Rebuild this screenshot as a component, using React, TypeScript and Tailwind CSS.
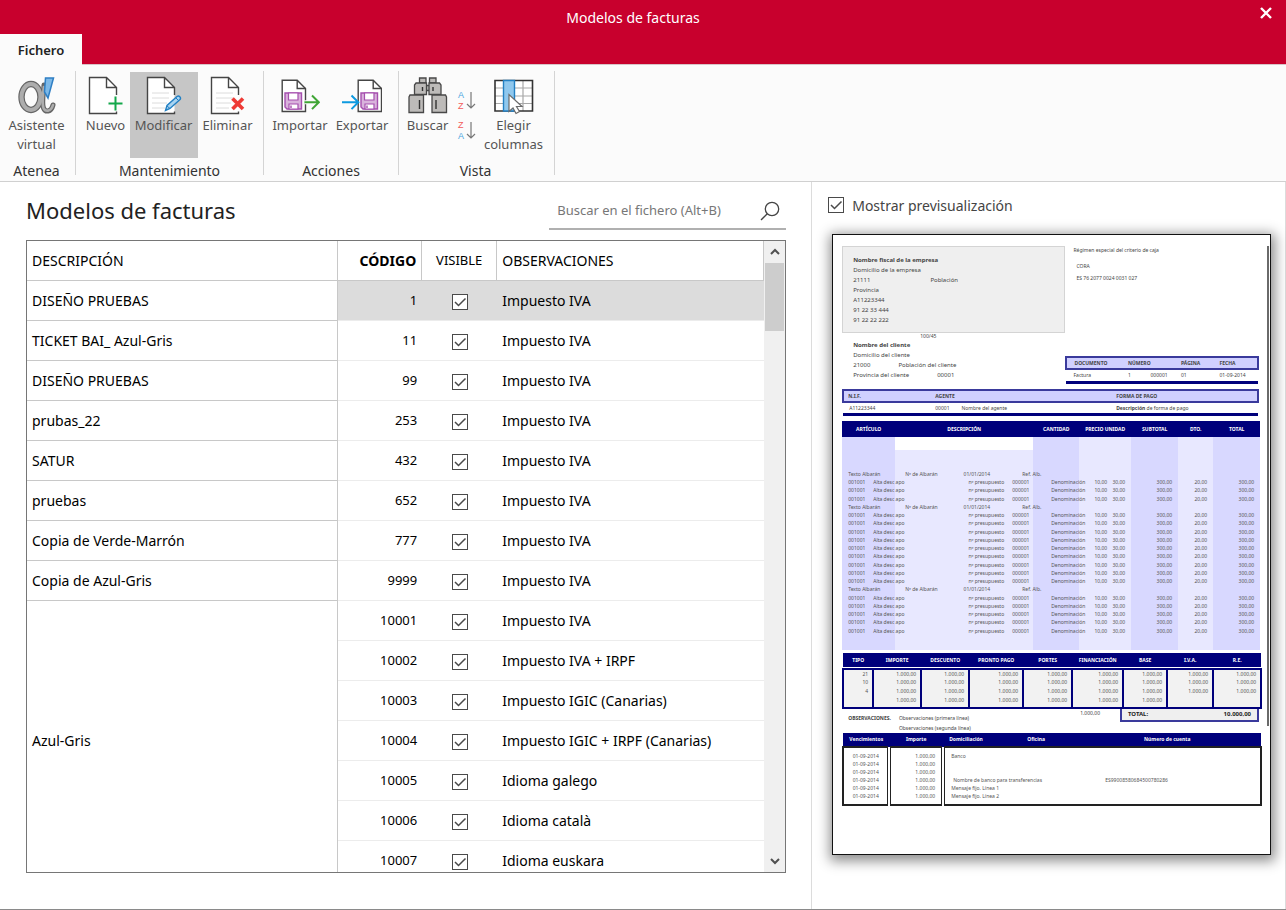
import { useState, type FC, type ReactNode } from 'react';

interface InvoiceModel {
	description: string;
	span: number;
	code: number;
	notes: string;
}

const models: InvoiceModel[] = [
	{ description: 'DISEÑO PRUEBAS', span: 1, code: 1, notes: 'Impuesto IVA' },
	{ description: 'TICKET BAI_ Azul-Gris', span: 1, code: 11, notes: 'Impuesto IVA' },
	{ description: 'DISEÑO PRUEBAS', span: 1, code: 99, notes: 'Impuesto IVA' },
	{ description: 'prubas_22', span: 1, code: 253, notes: 'Impuesto IVA' },
	{ description: 'SATUR', span: 1, code: 432, notes: 'Impuesto IVA' },
	{ description: 'pruebas', span: 1, code: 652, notes: 'Impuesto IVA' },
	{ description: 'Copia de Verde-Marrón', span: 1, code: 777, notes: 'Impuesto IVA' },
	{ description: 'Copia de Azul-Gris', span: 1, code: 9999, notes: 'Impuesto IVA' },
	{ description: 'Azul-Gris', span: 7, code: 10001, notes: 'Impuesto IVA' },
	{ description: '', span: 0, code: 10002, notes: 'Impuesto IVA + IRPF' },
	{ description: '', span: 0, code: 10003, notes: 'Impuesto IGIC (Canarias)' },
	{ description: '', span: 0, code: 10004, notes: 'Impuesto IGIC + IRPF (Canarias)' },
	{ description: '', span: 0, code: 10005, notes: 'Idioma galego' },
	{ description: '', span: 0, code: 10006, notes: 'Idioma català' },
	{ description: '', span: 0, code: 10007, notes: 'Idioma euskara' },
];

/* ---------- Icons ---------- */

const AlphaIcon: FC = () => (
	<svg className="w-10 h-10" viewBox="0 0 40 40" fill="none" aria-hidden="true">
		<g stroke="#666">
			<ellipse cx="14" cy="21" rx="9.5" ry="13" strokeWidth="6.4" />
			<path d="M27 9c-.5 9-2.500 18-.5 23 1.800 4.500 7.500 4.500 9.500-3" strokeWidth="5" strokeLinecap="round" />
		</g>
		<g stroke="#adadad">
			<ellipse cx="14" cy="21" rx="9.5" ry="13" strokeWidth="4" />
			<path d="M26.800 11c-.5 8-2.300 16-.3 21 1.800 4 7.500 4 9.500-3" strokeWidth="2.600" strokeLinecap="round" />
		</g>
		<path d="M28.500 2h8L31 22l-3.500-6z" fill="#7db9e8" stroke="#2f7fc4" strokeWidth="1.500" />
	</svg>
);

const Sheet: FC<{ lines?: boolean; children: ReactNode }> = ({ lines, children }) => (
	<svg className="w-9 h-10" viewBox="0 0 36 40" fill="none" aria-hidden="true">
		<path d="M28.500 18v-6.500l-10-10h-17v36h27v-2.500V18z" fill="#fff" />
		{lines && <path d="M6 17h17M6 22h17M6 27h15M6 32h13" stroke="#dcdcdc" />}
		<path d="M28.500 19v-7.500l-10-10h-17v36h27v-2M18.500 1.500v10h10" stroke="#454545" strokeWidth="1.400" />
		{children}
	</svg>
);

const FloppySheet: FC = () => (
	<>
		<path d="M.7.7h15l8.300 8.300v23H.7z" fill="#fff" stroke="#454545" strokeWidth="1.400" />
		<path d="M15.700.7V9H24" stroke="#454545" strokeWidth="1.400" />
		<path d="M3.500 13.500h16.500v16h-14.500l-2-2z" fill="#d9b3dc" stroke="#a54fae" strokeWidth="1.400" />
		<path d="M7 13.500h9.500v7H7z" fill="#fff" stroke="#a54fae" strokeWidth="1.200" />
		<path d="M7.500 29.500v-5h9v5z" fill="#fff" stroke="#a54fae" strokeWidth="1.200" />
		<path d="M9.500 26v2.500" stroke="#a54fae" strokeWidth="1.400" />
	</>
);

const ImportIcon: FC = () => (
	<svg className="w-10 h-10" viewBox="0 0 40 40" fill="none" aria-hidden="true">
		<g transform="translate(1.500 3.500)">
			<FloppySheet />
		</g>
		<path d="M24.500 26.300H38M32 19.500l6.800 6.800-6.800 6.800" stroke="#fafafa" strokeWidth="4" />
		<path d="M24.500 26.300H38M32 19.500l6.800 6.800-6.800 6.800" stroke="#3fa535" strokeWidth="2" />
	</svg>
);

const ExportIcon: FC = () => (
	<svg className="w-10 h-10" viewBox="0 0 40 40" fill="none" aria-hidden="true">
		<g transform="translate(15.500 3.500)">
			<FloppySheet />
		</g>
		<path d="M0 26.300h15.500M9.500 19.500l6.800 6.800-6.800 6.800" stroke="#0d9ae0" strokeWidth="2" />
	</svg>
);

const BinocularsIcon: FC = () => (
	<svg className="w-10 h-10" viewBox="0 0 40 40" aria-hidden="true">
		<g fill="#bdbbb9" stroke="#484848" strokeWidth="1.300">
			<path d="M11.500 2h6.500v5h-6.500zM21.500 2H28v5h-6.500z" />
			<path d="M17 9.500h6v5h-6z" />
			<path d="M8 7h10.500v11.500H6.500V9zM31.500 7H21v11.500h12V9z" />
			<path d="M2 19h13.500v17.500H1V21zM37.500 19H24v17.500h14.500V21z" />
		</g>
		<path d="M14.500 11v4M25 11v4M11.500 24v9M28 24v9" stroke="#333" strokeWidth="1.400" />
	</svg>
);

const SortIcon: FC<{ top: string; bottom: string }> = ({ top, bottom }) => (
	<svg className="w-5 h-[22px] overflow-visible font-['Liberation_Sans',sans-serif]" viewBox="0 0 20 22" fill="none" aria-hidden="true">
		<text x="1" y="9" fontSize="9" fill={top === 'A' ? '#4aa3df' : '#f25a5a'}>
			{top}
		</text>
		<text x="1" y="20" fontSize="9" fill={bottom === 'A' ? '#4aa3df' : '#f25a5a'}>
			{bottom}
		</text>
		<path d="M14 3v16M10 15l4 4 4-4" stroke="#777" strokeWidth="1.200" />
	</svg>
);

const ColumnsIcon: FC = () => (
	<svg className="w-10 h-10" viewBox="0 0 40 40" fill="none" aria-hidden="true">
		<path d="M1 4.500h37.500V35H1z" fill="#fff" />
		<path d="M1 12h37M1 20h37M1 27.500h37M29 5v30M20 5v30" stroke="#a8a8a8" strokeWidth="1.200" />
		<path d="M1 4.500h37.500V35H1z" stroke="#333" strokeWidth="1.600" />
		<path d="M9.500 4.500h11V35h-11z" fill="#90c8ee" stroke="#2380c3" strokeWidth="1.400" />
		<path d="M15 18.500v17l4-3.500 3 5.500 3.500-2-3-5h5.500z" fill="#fff" stroke="#6a6a6a" strokeWidth="1.200" />
	</svg>
);

const SearchIcon: FC = () => (
	<svg className="w-5 h-5" viewBox="0 0 20 20" fill="none" stroke="#444" strokeWidth="1.300" aria-hidden="true">
		<circle cx="12" cy="8" r="6.700" />
		<path d="M7.300 12.700L1 19" />
	</svg>
);

/* ---------- Controls ---------- */

interface CheckBoxProps {
	id: string;
	label?: string;
	checked: boolean;
	onChange: () => void;
}

const CheckBox: FC<CheckBoxProps> = ({ id, label, checked, onChange }) => (
	<span className="inline-grid align-middle">
		<input
			id={id}
			type="checkbox"
			aria-label={label}
			checked={checked}
			onChange={onChange}
			className="col-start-1 row-start-1 w-4 h-4 appearance-none border border-[#4a4a4a] bg-white"
		/>
		{checked && (
			<svg className="col-start-1 row-start-1 w-4 h-4 pointer-events-none" viewBox="0 0 16 16" fill="none" aria-hidden="true">
				<path d="M3 8l3.500 3.500L13.500 4.500" stroke="#4a4a4a" strokeWidth="1.500" />
			</svg>
		)}
	</span>
);

const RibbonGroup: FC<{ title: string; className: string; children: ReactNode }> = ({ title, className, children }) => (
	<section className={`my-1.5 flex flex-col justify-between border-r border-[#d4d4d4] pt-px ${className}`}>
		<div className="flex justify-center">{children}</div>
		<h2 className="text-center text-[14px] leading-2 text-[#333]">{title}</h2>
	</section>
);

interface RibbonButtonProps {
	icon: ReactNode;
	label: string;
	className: string;
	active?: boolean;
}

const RibbonButton: FC<RibbonButtonProps> = ({ icon, label, className, active }) => (
	<button
		type="button"
		className={`h-[86px] flex flex-col items-center pt-1 text-[13px] leading-[19px] text-[#555] ${
			active ? 'bg-[#c6c6c6]' : 'hover:bg-gray-200'
		} ${className}`}
	>
		{icon}
		{label}
	</button>
);

/* ---------- Invoice preview ---------- */

const itemRows = ['h', 'i', 'i', 'i', 'h', 'i', 'i', 'i', 'i', 'i', 'i', 'i', 'i', 'i', 'h', 'i', 'i', 'i', 'i', 'i'];

const ItemsTable: FC = () => (
	<table className="mt-[5px] w-full table-fixed text-[5px] leading-2 whitespace-nowrap text-[#555]">
		<colgroup>
			<col className="w-[31px]" />
			<col className="w-[22px]" />
			<col className="w-[113px]" />
			<col className="w-[25px]" />
			<col className="w-[46px]" />
			<col className="w-[28px]" />
			<col className="w-[24px]" />
			<col className="w-[47px]" />
			<col className="w-[35px]" />
			<col className="w-[47px]" />
		</colgroup>
		<thead className="bg-[#00007b] text-white">
			<tr className="h-4">
				<th colSpan={2}>ARTÍCULO</th>
				<th colSpan={2}>DESCRIPCIÓN</th>
				<th>CANTIDAD</th>
				<th colSpan={2}>PRECIO UNIDAD</th>
				<th>SUBTOTAL</th>
				<th>DTO.</th>
				<th>TOTAL</th>
			</tr>
		</thead>
		<tbody>
			<tr className="h-[13px]">
				<td colSpan={2} className="bg-[#d8d8ff]" />
				<td colSpan={2} />
				<td className="bg-[#d8d8ff]" />
				<td colSpan={2} className="bg-[#e8e8ff]" />
				<td className="bg-[#d8d8ff]" />
				<td className="bg-[#e8e8ff]" />
				<td className="bg-[#d8d8ff]" />
			</tr>
			<tr className="h-5">
				<td colSpan={2} className="bg-[#d8d8ff]" />
				<td colSpan={2} className="bg-[#e8e8ff]" />
				<td className="bg-[#d8d8ff]" />
				<td colSpan={2} className="bg-[#e8e8ff]" />
				<td className="bg-[#d8d8ff]" />
				<td className="bg-[#e8e8ff]" />
				<td className="bg-[#d8d8ff]" />
			</tr>
			{itemRows.map((kind, i) => (
				<tr key={i} className={i % 4 === 2 ? 'h-[9px]' : 'h-2'}>
					{kind === 'h' ? (
						<>
							<td colSpan={2} className="bg-[#d8d8ff] pl-1.5">
								Texto Albarán
							</td>
							<td className="bg-[#e8e8ff] pl-2.5 pr-[18px]">
								<span className="flex justify-between">
									<span>Nº de Albarán</span>
									<span>01/01/2014</span>
								</span>
							</td>
							<td className="bg-[#e8e8ff] pl-3.5">Ref. Alb.</td>
							<td className="bg-[#d8d8ff]" />
							<td colSpan={2} className="bg-[#e8e8ff]" />
							<td className="bg-[#d8d8ff]" />
							<td className="bg-[#e8e8ff]" />
							<td className="bg-[#d8d8ff]" />
						</>
					) : (
						<>
							<td className="bg-[#d8d8ff] pl-1.5">001001</td>
							<td className="bg-[#d8d8ff]">Alta desc apo</td>
							<td className="bg-[#e8e8ff] pr-1 text-right">nº presupuesto</td>
							<td className="bg-[#e8e8ff] pl-1">000001</td>
							<td className="bg-[#d8d8ff] pl-[18px]">Denominación</td>
							<td className="bg-[#e8e8ff] text-right">10,00</td>
							<td className="bg-[#e8e8ff] pr-1.5 text-right">30,00</td>
							<td className="bg-[#d8d8ff] pr-1.5 text-right">300,00</td>
							<td className="bg-[#e8e8ff] pr-1.5 text-right">20,00</td>
							<td className="bg-[#d8d8ff] pr-1.5 text-right">300,00</td>
						</>
					)}
				</tr>
			))}
			<tr className="h-[15px]">
				<td colSpan={2} className="bg-[#d8d8ff]" />
				<td colSpan={2} className="bg-[#e8e8ff]" />
				<td className="bg-[#d8d8ff]" />
				<td colSpan={2} className="bg-[#e8e8ff]" />
				<td className="bg-[#d8d8ff]" />
				<td className="bg-[#e8e8ff]" />
				<td className="bg-[#d8d8ff]" />
			</tr>
		</tbody>
	</table>
);

const taxHeads = ['TIPO', 'IMPORTE', 'DESCUENTO', 'PRONTO PAGO', 'PORTES', 'FINANCIACIÓN', 'BASE', 'I.V.A.', 'R.E.'];
const amount = '1.000,00';
const taxRows = [
	['21', amount, amount, amount, amount, amount, amount, amount, amount],
	['10', amount, amount, amount, amount, amount, amount, amount, amount],
	['4', amount, amount, amount, amount, amount, amount, amount, amount],
	['', amount, amount, amount, amount, amount, amount, '', ''],
];

const TaxTable: FC = () => (
	<table className="mt-[3px] w-full table-fixed border-collapse text-[5px] leading-2 whitespace-nowrap text-[#555]">
		<colgroup>
			<col className="w-[30px]" />
			<col className="w-[48px]" />
			<col className="w-[48px]" />
			<col className="w-[54px]" />
			<col className="w-[49px]" />
			<col className="w-[51px]" />
			<col className="w-[44px]" />
			<col className="w-[46px]" />
			<col className="w-[48px]" />
		</colgroup>
		<thead className="bg-[#00007b] text-white">
			<tr className="h-[14px]">
				{taxHeads.map((head) => (
					<th key={head}>{head}</th>
				))}
			</tr>
		</thead>
		<tbody>
			<tr className="h-0.5">
				<td colSpan={9} />
			</tr>
			{taxRows.map((row, i) => (
				<tr
					key={i}
					className={`bg-[#f2f2f2] ${i === 0 ? 'border-t-2 border-[#00007b]' : ''} ${
						i === 3 ? 'h-3 border-b-2 border-[#00007b] align-top' : 'h-[9px]'
					}`}
				>
					{row.map((cell, j) => (
						<td key={j} className="border-x-2 border-[#00007b] pr-1 text-right">
							{cell}
						</td>
					))}
				</tr>
			))}
		</tbody>
	</table>
);

const details = ['Banco', '', '', 'Nombre de banco para transferencias', 'Mensaje fijo. Línea 1', 'Mensaje fijo. Línea 2'];

const PaymentsTable: FC = () => (
	<table className="w-full table-fixed border-collapse text-[5px] leading-2 whitespace-nowrap text-[#555]">
		<colgroup>
			<col className="w-[46px]" />
			<col className="w-[54px]" />
			<col className="w-[78px]" />
			<col className="w-[52px]" />
			<col className="w-[188px]" />
		</colgroup>
		<thead className="bg-[#00007b] text-white">
			<tr className="h-[14px]">
				<th>Vencimientos</th>
				<th>Importe</th>
				<th className="pl-1.5 text-left">Domiciliación</th>
				<th className="pl-1.5 text-left">Oficina</th>
				<th>Número de cuenta</th>
			</tr>
		</thead>
		<tbody className="border-2 border-[#222]">
			{details.map((detail, i) => (
				<tr key={i} className={i === 0 ? 'h-[13px] align-bottom' : i === 5 ? 'h-[13px] align-top' : 'h-2'}>
					<td className="border-r-4 border-double border-[#222] text-center">01-09-2014</td>
					<td className="border-r-4 border-double border-[#222] pr-1.5 text-right">{amount}</td>
					<td colSpan={2} className={i === 3 ? 'pl-2' : 'pl-1.5'}>
						{detail}
					</td>
					<td className="pl-8">{i === 3 ? 'ES99008580684500780286' : ''}</td>
				</tr>
			))}
		</tbody>
	</table>
);

const InvoicePreview: FC = () => (
	<article className="flex h-[621px] overflow-hidden border border-[#111] bg-white pt-[11px] pr-px pl-[9px] text-[6px] text-[#444] shadow-[1px_3px_12px_3px_rgba(0,0,0,0.45)]">
		<div className="min-w-0 flex-1 pr-2">
			<div className="flex justify-between">
				<div className="w-[224px] pb-1">
					<div className="h-[87px] border border-[#d4d4d4] bg-[#efefef] pt-2 pl-2.5 leading-[10px]">
						<p className="font-bold">Nombre fiscal de la empresa</p>
						<p>Domicilio de la empresa</p>
						<p className="flex gap-[60px]">
							<span>21111</span>
							<span>Población</span>
						</p>
						<p>Provincia</p>
						<p>A11223344</p>
						<p>91 22 33 444</p>
						<p>91 22 22 222</p>
					</div>
					<p className="pl-[78px] text-[5px] leading-[6px]">100/45</p>
					<div className="pt-px pl-[11px] leading-[10px]">
						<p className="font-bold">Nombre del cliente</p>
						<p>Domicilio del cliente</p>
						<p className="flex gap-7">
							<span>21000</span>
							<span>Población del cliente</span>
						</p>
						<p className="flex gap-7">
							<span>Provincia del cliente</span>
							<span>00001</span>
						</p>
					</div>
				</div>
				<div className="w-[196px] flex flex-col text-[5px]">
					<p className="pl-[9px] leading-2">Régimen especial del criterio de caja</p>
					<p className="pt-2 pl-3 leading-2">CORA</p>
					<p className="pt-1 pl-3 leading-2">ES 76 2077 0024 0031 027</p>
					<table className="mt-auto w-full table-fixed text-left leading-2">
						<thead className="border-2 border-[#3a3a9c] bg-[#d0d0ff]">
							<tr className="h-3">
								<th className="pl-2">DOCUMENTO</th>
								<th className="pl-6" colSpan={2}>
									NÚMERO
								</th>
								<th>PÁGINA</th>
								<th>FECHA</th>
							</tr>
						</thead>
						<tbody className="border-b-3 border-[#00007b]">
							<tr className="h-[14px]">
								<td className="pl-2">Factura</td>
								<td className="pl-6">1</td>
								<td className="pl-2">000001</td>
								<td>01</td>
								<td>01-09-2014</td>
							</tr>
						</tbody>
					</table>
				</div>
			</div>
			<table className="mt-[5px] w-full table-fixed text-left text-[5px] leading-2">
				<thead className="border-2 border-[#3a3a9c] bg-[#d0d0ff]">
					<tr className="h-3">
						<th className="w-[92px] pl-1">N.I.F.</th>
						<th className="w-[181px]">AGENTE</th>
						<th>FORMA DE PAGO</th>
					</tr>
				</thead>
				<tbody className="border-b-3 border-[#00007b]">
					<tr className="h-3">
						<td className="pl-1.5">A11223344</td>
						<td>
							<span className="mr-3">00001</span>Nombre del agente
						</td>
						<td>
							<b>Descripción</b> de forma de pago
						</td>
					</tr>
				</tbody>
			</table>
			<ItemsTable />
			<TaxTable />
			<div className="flex justify-between text-[5px]">
				<div className="flex gap-2 pt-1 pl-1.5 leading-[10px]">
					<b>OBSERVACIONES.</b>
					<div>
						<p>Observaciones (primera línea)</p>
						<p>Observaciones (segunda línea)</p>
					</div>
				</div>
				<div className="flex items-start gap-5">
					<span className="leading-2">{amount}</span>
					<p className="flex w-[139px] justify-between border-2 border-t-0 border-[#3a3a9c] bg-[#efefef] px-1.5 text-[6px] leading-[11px] font-bold text-[#222]">
						<span>TOTAL:</span>
						<span>10.000,00</span>
					</p>
				</div>
			</div>
			<PaymentsTable />
		</div>
		<div className="h-[480px] w-0.5 bg-[#6a6a6a]" />
	</article>
);

/* ---------- Window ---------- */

const App: FC = () => {
	const [hidden, setHidden] = useState<number[]>([]);
	const [showPreview, setShowPreview] = useState(true);

	const toggleVisible = (code: number) => {
		setHidden((prev) => (prev.includes(code) ? prev.filter((c) => c !== code) : [...prev, code]));
	};

	return (
		<div className="min-h-screen flex flex-col bg-white border-b border-[#8a8a8a] font-['Noto_Sans','Open_Sans',sans-serif] text-[14px] text-black">
			<header className="bg-[#c8002d]">
				<div className="flex items-center pl-5 h-[34px]">
					<h1 className="flex-1 text-center text-[14px] text-white">Modelos de facturas</h1>
					<button type="button" aria-label="Cerrar" className="w-10 h-6 mb-2 flex items-center justify-center">
						<svg className="w-3 h-3" viewBox="0 0 12 12" aria-hidden="true">
							<path d="M1 1l10 10M11 1L1 11" stroke="#fff" strokeWidth="2.400" />
						</svg>
					</button>
				</div>
				<nav className="flex">
					<a
						href="#fichero"
						className="w-[82px] h-[31px] bg-[#fbfbfb] text-center text-[13px] leading-[32px] font-semibold text-[#222]"
					>
						Fichero
					</a>
					<div className="flex-1 border-b border-[#d8c4c8]" />
				</nav>
			</header>

			<div className="flex h-[117px] border-b border-[#d0d0d0] bg-[#fbfbfb]">
				<RibbonGroup title="Atenea" className="w-[76px] pr-0.5">
					<RibbonButton icon={<AlphaIcon />} label="Asistente virtual" className="w-[72px]" />
				</RibbonGroup>
				<RibbonGroup title="Mantenimiento" className="w-[188px]">
					<RibbonButton
						icon={
							<Sheet>
								<path d="M27.500 20.500v14M20.500 27.500h14" stroke="#fbfbfb" strokeWidth="4" />
								<path d="M27.500 20.500v14M20.500 27.500h14" stroke="#12a84a" strokeWidth="2" />
							</Sheet>
						}
						label="Nuevo"
						className="w-12"
					/>
					<RibbonButton
						icon={
							<Sheet lines>
								<path d="M19.500 34.500l1.500-5 10-9c2-1.500 4.500 1 3 3l-10 9z" fill="#a9d4f2" stroke="#2380c3" strokeWidth="1.400" />
								<path d="M30 22l2.500 2.500M21 30l3 2.500" stroke="#2380c3" />
							</Sheet>
						}
						label="Modificar"
						className="w-[68px]"
						active
					/>
					<RibbonButton
						icon={
							<Sheet lines>
								<path d="M22.500 22.500l10.500 10.500M33 22.500L22.500 33" stroke="#fbfbfb" strokeWidth="6" />
								<path d="M22.500 22.500l10.500 10.500M33 22.500L22.500 33" stroke="#ee3a35" strokeWidth="3.600" />
							</Sheet>
						}
						label="Eliminar"
						className="w-[60px]"
					/>
				</RibbonGroup>
				<RibbonGroup title="Acciones" className="w-[135px]">
					<RibbonButton icon={<ImportIcon />} label="Importar" className="w-[62px]" />
					<RibbonButton icon={<ExportIcon />} label="Exportar" className="w-[62px]" />
				</RibbonGroup>
				<RibbonGroup title="Vista" className="w-[156px] pr-0.5">
					<RibbonButton icon={<BinocularsIcon />} label="Buscar" className="w-[54px]" />
					<div className="ml-0.5 flex flex-col gap-2 pt-[17px]">
						<button type="button" aria-label="Orden ascendente" className="h-[22px]">
							<SortIcon top="A" bottom="Z" />
						</button>
						<button type="button" aria-label="Orden descendente" className="h-[22px]">
							<SortIcon top="Z" bottom="A" />
						</button>
					</div>
					<RibbonButton icon={<ColumnsIcon />} label="Elegir columnas" className="w-[74px]" />
				</RibbonGroup>
			</div>

			<div className="flex-1 grid grid-cols-[minmax(0,12fr)_minmax(0,7fr)]">
				<main className="border-r border-[#dcdcdc] px-[25px] pl-[26px] pt-3">
					<div className="flex items-start justify-between">
						<h2 className="text-[22px] leading-8 text-[#222]">Modelos de facturas</h2>
						<div className="flex h-9 w-[237px] items-center border-b-2 border-[#b0b0b0] pr-1.5 pl-2">
							<input
								type="text"
								aria-label="Buscar en el fichero"
								placeholder="Buscar en el fichero (Alt+B)"
								className="min-w-0 flex-1 text-[13px] outline-none placeholder:text-[#777]"
							/>
							<button type="button" aria-label="Buscar">
								<SearchIcon />
							</button>
						</div>
					</div>

					<div className="mt-2.5 flex h-[633px] overflow-hidden border border-[#767676]">
						<table className="w-full table-fixed border-separate border-spacing-0">
							<thead>
								<tr className="h-10 text-left">
									<th className="border-r border-b border-[#c8c8c8] pl-[5px] font-normal">DESCRIPCIÓN</th>
									<th className="w-[84px] border-r border-b border-[#c8c8c8] pr-[5px] text-right font-bold">CÓDIGO</th>
									<th className="w-[75px] border-r border-b border-[#c8c8c8] text-center text-[13px] font-normal">VISIBLE</th>
									<th className="w-[267px] border-r border-b border-[#c8c8c8] pl-[5px] font-normal">OBSERVACIONES</th>
								</tr>
							</thead>
							<tbody>
								{models.map((model, i) => (
									<tr key={model.code} className={`h-10 ${i === 0 ? 'bg-[#dcdcdc]' : 'bg-white'}`}>
										{model.span > 0 && (
											<td rowSpan={model.span} className="border-r border-b border-[#c8c8c8] bg-white pl-[5px]">
												{model.description}
											</td>
										)}
										<td className="border-b border-[#ececec] pr-[5px] text-right text-[13px]">{model.code}</td>
										<td className="border-b border-[#ececec] text-center">
											<CheckBox
												id={`visible-${model.code}`}
												label={`Visible ${model.code}`}
												checked={!hidden.includes(model.code)}
												onChange={() => toggleVisible(model.code)}
											/>
										</td>
										<td className="border-b border-[#ececec] pl-[5px]">{model.notes}</td>
									</tr>
								))}
							</tbody>
						</table>
						<div className="flex w-[21px] shrink-0 flex-col bg-[#f0f0f0] px-px">
							<button type="button" aria-label="Subir" className="flex h-[22px] shrink-0 items-center justify-center">
								<svg className="w-2.5 h-2.5" viewBox="0 0 10 10" fill="none" aria-hidden="true">
									<path d="M1 7l4-4 4 4" stroke="#505050" strokeWidth="2" />
								</svg>
							</button>
							<div className="h-[68px] bg-[#cdcdcd]" />
							<button type="button" aria-label="Bajar" className="mt-auto flex h-[22px] shrink-0 items-center justify-center">
								<svg className="w-2.5 h-2.5" viewBox="0 0 10 10" fill="none" aria-hidden="true">
									<path d="M1 3l4 4 4-4" stroke="#505050" strokeWidth="2" />
								</svg>
							</button>
						</div>
					</div>
				</main>

				<aside className="border-r border-[#dcdcdc] pt-[13px] pr-3.5 pl-5">
					<div className="-ml-1 mb-[19px] flex items-center gap-2 h-5">
						<CheckBox id="preview" checked={showPreview} onChange={() => setShowPreview(!showPreview)} />
						<label htmlFor="preview" className="text-[14px] text-[#444]">
							Mostrar previsualización
						</label>
					</div>
					{showPreview && <InvoicePreview />}
				</aside>
			</div>
		</div>
	);
};

export default App;
